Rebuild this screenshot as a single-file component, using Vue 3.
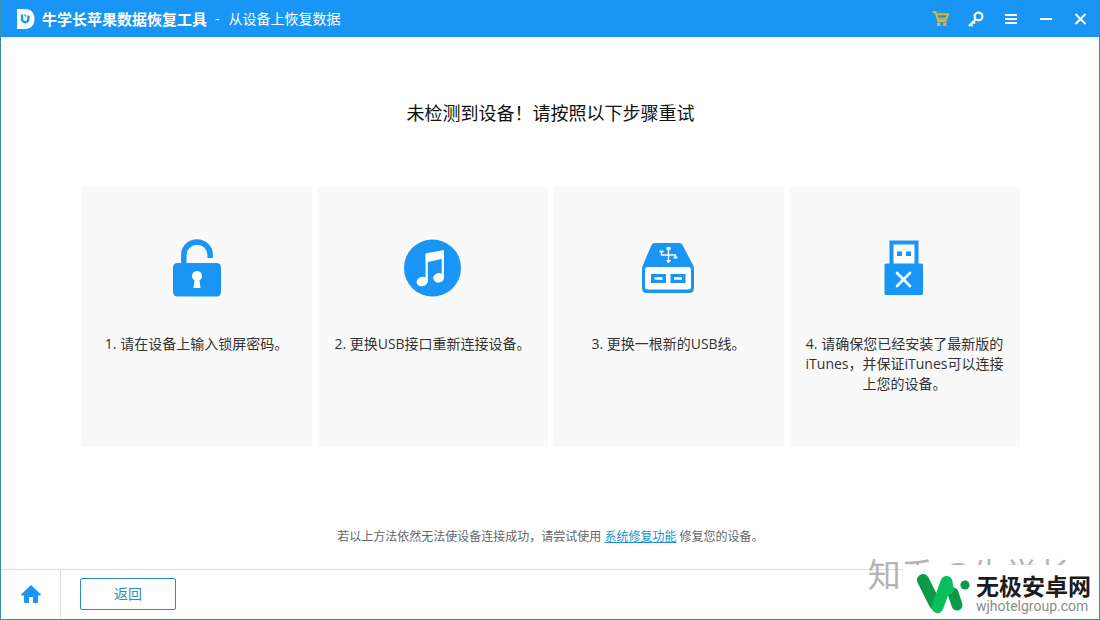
<script setup>
const steps = [
  { icon: 'lock', text: '1. 请在设备上输入锁屏密码。' },
  { icon: 'music', text: '2. 更换USB接口重新连接设备。' },
  { icon: 'hub', text: '3. 更换一根新的USB线。' },
  { icon: 'usb', text: '4. 请确保您已经安装了最新版的iTunes，并保证iTunes可以连接上您的设备。' },
]
</script>

<template>
  <div class="window">
    <header class="titlebar">
      <svg class="logo" viewBox="0 0 18 20" aria-hidden="true">
        <path d="M0 0h8c6 0 9.500 4 9.500 10S14 20 8 20H0z" fill="#fff" />
        <path d="M5 5.500v4.500a3.200 3.200 0 0 0 6.400 0V6.500" fill="none" stroke="#1995f5" stroke-width="2.400" />
        <path d="M7.500 5.500l1.500 2" stroke="#1995f5" stroke-width="1.300" />
      </svg>
      <h1 class="app-name">牛学长苹果数据恢复工具</h1>
      <span class="dash">-</span>
      <span class="section">从设备上恢复数据</span>
      <div class="tools">
        <button type="button" class="tool cart" aria-label="购买">
          <svg viewBox="0 0 18 18" fill="none" stroke="currentColor" stroke-width="2">
            <path d="M0.500 2h3l2.800 9h8M4.200 4.200h12l-1.800 4.500H5.800" />
            <path d="M5 12.500h3.500v3.500H5zM11 12.500h3.500v3.500H11z" fill="currentColor" stroke="none" />
          </svg>
        </button>
        <button type="button" class="tool" aria-label="注册">
          <svg viewBox="0 0 18 18" fill="none" stroke="currentColor" stroke-width="2.200">
            <circle cx="11.500" cy="6.500" r="3.900" />
            <path d="M8.800 9.200L2 16M3 13.500l2.500 2.500M5.500 11l2.500 2.500" />
          </svg>
        </button>
        <button type="button" class="tool" aria-label="菜单">
          <svg viewBox="0 0 18 18" fill="currentColor">
            <path d="M3 4h12v2H3zM3 8h12v2H3zM3 12h12v2H3z" />
          </svg>
        </button>
        <button type="button" class="tool" aria-label="最小化">
          <svg viewBox="0 0 18 18" fill="currentColor"><path d="M3 8h12v2H3z" /></svg>
        </button>
        <button type="button" class="tool" aria-label="关闭">
          <svg viewBox="0 0 18 18" fill="none" stroke="currentColor" stroke-width="2">
            <path d="M3.500 4l10 10M13.500 4L3.500 14" />
          </svg>
        </button>
      </div>
    </header>

    <main class="content">
      <h2 class="heading">未检测到设备！请按照以下步骤重试</h2>
      <ol class="steps">
        <li v-for="step in steps" :key="step.icon" class="card">
          <svg v-if="step.icon === 'lock'" class="icon" viewBox="0 0 60 60" aria-hidden="true">
            <path d="M16.800 28V17a13.200 13 0 0 1 26.400 0V20" fill="none" stroke="#1995f5" stroke-width="5.500" />
            <rect x="6" y="25" width="48" height="33.500" rx="4.500" fill="#1995f5" />
            <path d="M30 33a5 5 0 0 1 2.500 9.300L33.500 50h-7l1-7.700A5 5 0 0 1 30 33z" fill="#fff" />
          </svg>
          <svg v-else-if="step.icon === 'music'" class="icon" viewBox="0 0 60 60" aria-hidden="true">
            <circle cx="29.500" cy="30" r="28.500" fill="#1995f5" />
            <path d="M22.500 15.500L41 12v27.500h-2.300V21L24.800 24v19h-2.300z" fill="#fff" />
            <ellipse cx="19.200" cy="43.500" rx="5.700" ry="4.700" transform="rotate(-15 19.200 43.500)" fill="#fff" />
            <ellipse cx="35.700" cy="39.700" rx="5.500" ry="4.700" transform="rotate(-15 35.700 39.700)" fill="#fff" />
          </svg>
          <svg v-else-if="step.icon === 'hub'" class="icon" viewBox="1 0 60 60" aria-hidden="true">
            <path d="M16.500 5h25q2 0 3 2l10.500 20q1 2 1 4v19q0 5-5 5H9q-5 0-5-5V31q0-2 1-4L13.500 7q1-2 3-2z" fill="#1995f5" />
            <rect x="7" y="29" width="46" height="22.500" rx="2.500" fill="#fff" />
            <path d="M13 36h15v9H13zM32.500 36h15v9h-15z" fill="#1995f5" />
            <path d="M16.500 39.300h8v2.500h-8zM36 39.300h8v2.500h-8z" fill="#fff" />
            <path d="M30.500 10v13M23.500 14v3h14v3" fill="none" stroke="#fff" stroke-width="1.400" />
            <path d="M28.500 9h4v3h-4zM21.500 12.500h4v2h-4zM35.500 18.500h4v2h-4zM28 22h5l-2.500 3.500z" fill="#fff" />
          </svg>
          <svg v-else class="icon" viewBox="2 0 60 60" aria-hidden="true">
            <rect x="18.500" y="4.500" width="25" height="25" fill="#fcfcfc" stroke="#1995f5" stroke-width="4" />
            <path d="M24 13.500h5v4.500h-5zM33 13.500h5v4.500h-5z" fill="#1995f5" />
            <rect x="11.500" y="25.500" width="38.500" height="31.500" rx="1.500" fill="#1995f5" />
            <path d="M24 35l13 13M37 35L24 48" stroke="#fff" stroke-width="2.600" stroke-linecap="round" />
          </svg>
          <p class="step-text">{{ step.text }}</p>
        </li>
      </ol>
      <p class="hint">若以上方法依然无法使设备连接成功，请尝试使用 <a href="#repair">系统修复功能</a> 修复您的设备。</p>
    </main>

    <footer class="footer">
      <button type="button" class="home" aria-label="主页">
        <svg viewBox="0 0 20 18" aria-hidden="true">
          <path d="M10 0L0 9.500q0 1 1 1h2V17q0 1 1 1h4v-6h4v6h4q1 0 1-1v-6.500h2q1 0 1-1z" fill="#1995f5" />
        </svg>
      </button>
      <button type="button" class="back">返回</button>
    </footer>

    <div class="watermark">知乎 @牛学长</div>
    <div class="badge">
      <svg class="badge-logo" viewBox="0 0 54 44" aria-hidden="true">
        <g fill="none" stroke-linecap="round" stroke-width="12">
          <path d="M37 22l4 12" stroke="#0b9a48" stroke-width="11" />
          <path d="M7 9l12 24" stroke="#0b9a48" />
          <path d="M21.500 36L30.500 11" stroke="#0bc05c" />
          <path d="M30.500 11l2 7" stroke="#0bc05c" stroke-width="11" />
        </g>
        <circle cx="49" cy="14" r="4.600" fill="#0b9a48" />
      </svg>
      <div class="badge-copy">
        <strong>无极安卓网</strong>
        <span>wjhotelgroup.com</span>
      </div>
    </div>
  </div>
</template>

<style>
body {
  margin: 0;
}
</style>

<style scoped>
.window {
  position: relative;
  box-sizing: border-box;
  min-height: 100vh;
  display: flex;
  flex-direction: column;
  overflow: hidden;
  border: 1px solid #3a8fb0;
  border-top: 0;
  background: #fff;
  color: #333;
  font-family: "Open Sans", "Noto Sans CJK SC", sans-serif;
  font-size: 14px;
}
button {
  padding: 0;
  border: 0;
  background: none;
  font: inherit;
  color: inherit;
  cursor: pointer;
}
.titlebar {
  display: flex;
  align-items: center;
  height: 37px;
  margin: 0 -1px;
  padding: 0 10px 0 17px;
  background: #1995f5;
  color: #fff;
}
.logo {
  width: 18px;
  height: 20px;
}
.app-name {
  margin: 0 0 0 7px;
  font-size: 15px;
  line-height: 20px;
  font-weight: 700;
}
.dash {
  margin: 0 9px 0 8px;
}
.section {
  line-height: 20px;
}
.tools {
  display: flex;
  gap: 17px;
  margin-left: auto;
}
.tool {
  width: 18px;
  height: 18px;
}
.tool svg {
  display: block;
  width: 18px;
  height: 18px;
}
.cart {
  color: #d9b435;
}
.content {
  flex: 1;
  display: flex;
  flex-direction: column;
  padding: 62px 79px 22px 80px;
}
.heading {
  margin: 0;
  font-size: 18px;
  line-height: 28px;
  font-weight: 400;
  text-align: center;
  color: #111;
}
.steps {
  display: grid;
  grid-template-columns: repeat(4, 1fr);
  gap: 5px;
  margin: 60px 0 0;
  padding: 0;
  list-style: none;
}
.card {
  box-sizing: border-box;
  min-height: 260px;
  padding: 51px 14px 20px;
  background: #f9f9f9;
  text-align: center;
}
.icon {
  display: block;
  width: 60px;
  height: 60px;
  margin: 0 auto;
}
.step-text {
  margin: 36px 0 0;
  line-height: 20px;
}
.hint {
  margin: auto 0 0;
  font-size: 12px;
  line-height: 20px;
  text-align: center;
  color: #666;
}
.hint a {
  color: #1a94c8;
}
.footer {
  display: flex;
  align-items: flex-start;
  height: 49px;
  border-top: 1px solid #dcdcdc;
}
.home {
  display: flex;
  align-items: center;
  justify-content: center;
  width: 60px;
  height: 48px;
  border-right: 1px solid #dcdcdc;
}
.home svg {
  width: 20px;
  height: 18px;
}
.back {
  width: 96px;
  height: 32px;
  margin: 8px 0 0 19px;
  border: 1px solid #2a8fb5;
  border-radius: 2px;
  line-height: 30px;
  color: #2a8fb5;
}
.watermark {
  position: absolute;
  right: 28px;
  bottom: 22px;
  font-size: 33px;
  line-height: 44px;
  color: #b4b4b4;
}
.badge {
  position: absolute;
  right: -1px;
  bottom: -1px;
  display: flex;
  align-items: center;
  gap: 6px;
  box-sizing: border-box;
  height: 55px;
  padding: 0 9px 0 13px;
  background: #fff;
}
.badge-logo {
  width: 54px;
  height: 44px;
}
.badge-copy {
  display: flex;
  flex-direction: column;
  padding-top: 2px;
}
.badge-copy strong {
  font-size: 23px;
  line-height: 24px;
  font-weight: 700;
  color: #1c1c1c;
}
.badge-copy span {
  font-family: Roboto, "Liberation Sans", sans-serif;
  font-size: 14px;
  line-height: 16px;
  color: #8c8c8c;
}
</style>
